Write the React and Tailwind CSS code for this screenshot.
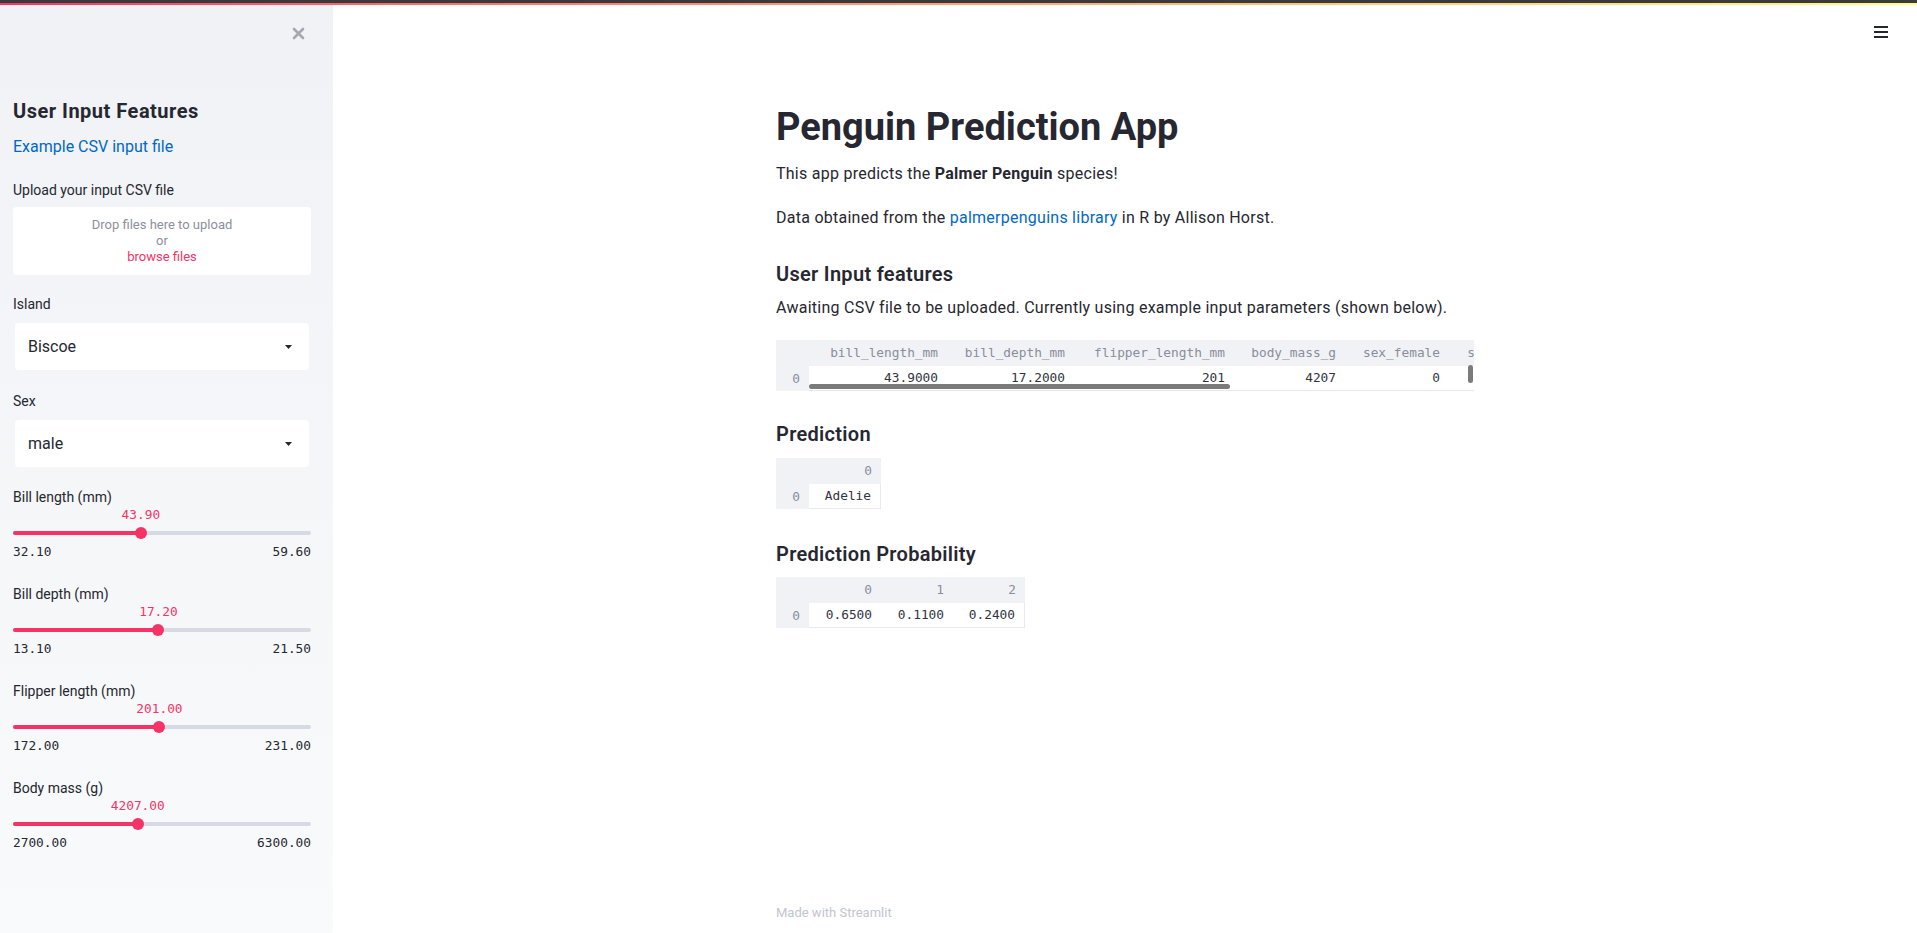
import React from "react";

const sliders = [
  { label: "Bill length (mm)", value: 43.9, min: 32.1, max: 59.6 },
  { label: "Bill depth (mm)", value: 17.2, min: 13.1, max: 21.5 },
  { label: "Flipper length (mm)", value: 201, min: 172, max: 231 },
  { label: "Body mass (g)", value: 4207, min: 2700, max: 6300 },
];

const inputCols = [
  { name: "bill_length_mm", value: "43.9000", w: "w-[137px]" },
  { name: "bill_depth_mm", value: "17.2000", w: "w-[127px]" },
  { name: "flipper_length_mm", value: "201", w: "w-[160px]" },
  { name: "body_mass_g", value: "4207", w: "w-[111px]" },
  { name: "sex_female", value: "0", w: "w-[104px]" },
  { name: "sex_male", value: "1", w: "w-[89px]" },
];

function Slider({ label, value, min, max }) {
  const pct = ((value - min) / (max - min)) * 100;
  return (
    <div className="mt-[23px] first:mt-[20px]">
      <div className="flex h-5 items-center text-[14px]">{label}</div>
      <div className="relative h-4">
        <span
          className="absolute top-0 -translate-x-1/2 font-['DejaVu_Sans_Mono',monospace] text-[12.8px] leading-4 text-[#f63366]"
          style={{ left: `${pct}%` }}
        >
          {value.toFixed(2)}
        </span>
      </div>
      <div className="relative flex h-5 items-center">
        <div className="h-1 w-full rounded-full bg-[#d5dae4]" />
        <div
          className="absolute left-0 h-1 rounded-full bg-[#f63366]"
          style={{ width: `${pct}%` }}
        />
        <div
          className="absolute h-3 w-3 -translate-x-1/2 rounded-full bg-[#f63366]"
          style={{ left: `${pct}%` }}
        />
      </div>
      <div className="flex h-[18px] items-center justify-between font-['DejaVu_Sans_Mono',monospace] text-[12.8px]">
        <span>{min.toFixed(2)}</span>
        <span>{max.toFixed(2)}</span>
      </div>
    </div>
  );
}

function SelectBox({ value }) {
  return (
    <div className="mx-[2px] mt-[9px] flex h-[47px] items-center justify-between rounded bg-white pl-[13px] pr-[17px] text-[16px]">
      <span>{value}</span>
      <svg width="7" height="4" viewBox="0 0 7 4">
        <polygon points="0,0 7,0 3.5,4" fill="#262730" />
      </svg>
    </div>
  );
}

function Sidebar() {
  return (
    <div className="flex h-[928px] w-[333px] shrink-0 flex-col bg-linear-to-b from-[#f0f2f6] to-[#f9fafb] pl-[13px] pr-[22px] text-[#262730]">
      <div className="flex h-[90px] justify-end pr-[6px] pt-[22px]">
        <svg width="13" height="13" viewBox="0 0 13 13">
          <path d="M2 2 L11 11 M11 2 L2 11" stroke="#a5a8b2" strokeWidth="2.6" strokeLinecap="round" />
        </svg>
      </div>
      <div className="flex h-8 items-center text-[20px] font-bold tracking-[0.025em]">User Input Features</div>
      <div className="flex h-10 items-center text-[16px] text-[#0068c9]">Example CSV input file</div>
      <div className="mt-[13px] flex h-5 items-center text-[14px]">Upload your input CSV file</div>
      <div className="mt-[7px] flex h-[68px] flex-col items-center justify-center rounded bg-white text-[13px] leading-4">
        <span className="text-[#8d909c]">Drop files here to upload</span>
        <span className="text-[#8d909c]">or</span>
        <span className="text-[#f63366]">browse files</span>
      </div>
      <div className="mt-[19px] flex h-5 items-center text-[14px]">Island</div>
      <SelectBox value="Biscoe" />
      <div className="mt-[21px] flex h-5 items-center text-[14px]">Sex</div>
      <SelectBox value="male" />
      <div>
        {sliders.map((s) => (
          <Slider key={s.label} {...s} />
        ))}
      </div>
    </div>
  );
}

function SmallTable({ header, row }) {
  return (
    <div className="flex w-fit font-['DejaVu_Sans_Mono',monospace] text-[12.8px]">
      <div className="w-[33px] bg-[#f0f2f6] text-[#8a8d9b]">
        <div className="h-[26px]" />
        <div className="flex h-[25px] items-center justify-end pr-[9px]">0</div>
      </div>
      {header.map((h, i) => (
        <div key={h} className="w-[72px]">
          <div className="flex h-[26px] items-center justify-end bg-[#f0f2f6] pr-[9px] text-[#8a8d9b]">{h}</div>
          <div
            className={
              "flex h-[25px] items-center justify-end border-b border-[#e6e9ef] bg-white pr-[9px] text-[#31333f] " +
              (i === header.length - 1 ? "border-r" : "")
            }
          >
            {row[i]}
          </div>
        </div>
      ))}
    </div>
  );
}

function InputTable() {
  return (
    <div className="relative mt-[20px] w-full overflow-hidden font-['DejaVu_Sans_Mono',monospace] text-[12.8px]">
      <div className="flex">
        <div className="w-[33px] shrink-0 bg-[#f0f2f6] text-[#8a8d9b]">
          <div className="h-[26px]" />
          <div className="flex h-[25px] items-center justify-end pr-[9px]">0</div>
        </div>
        {inputCols.map((c) => (
          <div key={c.name} className={"shrink-0 " + c.w}>
            <div className="flex h-[26px] items-center justify-end bg-[#f0f2f6] pr-2 text-[#8a8d9b]">{c.name}</div>
            <div className="flex h-[25px] items-center justify-end border-b border-[#e6e9ef] bg-white pr-2 text-[#31333f]">
              {c.value}
            </div>
          </div>
        ))}
      </div>
      <div className="absolute left-[33px] top-[44px] h-[5px] w-[421px] rounded-full bg-[#7b7b7b]" />
      <div className="absolute right-[1px] top-[25px] h-[18px] w-[5px] rounded-full bg-[#7b7b7b]" />
    </div>
  );
}

function Main() {
  return (
    <div className="relative flex h-[928px] flex-1 flex-col">
      <svg className="absolute right-[29px] top-[21px]" width="14" height="12" viewBox="0 0 14 12">
        <rect x="0" y="0" width="14" height="2" fill="#262730" />
        <rect x="0" y="5" width="14" height="2" fill="#262730" />
        <rect x="0" y="10" width="14" height="2" fill="#262730" />
      </svg>
      <div className="mx-auto flex h-full w-[730px] flex-col px-4 text-[#262730]">
        <h1 className="mt-[97px] flex h-[50px] items-center text-[38px] font-bold">Penguin Prediction App</h1>
        <p className="mt-[10px] flex h-6 items-center text-[16px] tracking-[0.016em]">
          This app predicts the&nbsp;<b className="font-bold">Palmer Penguin</b>&nbsp;species!
        </p>
        <p className="mt-[20px] flex h-6 items-center text-[16px] tracking-[0.016em]">
          Data obtained from the&nbsp;<span className="text-[#0068c9]">palmerpenguins library</span>&nbsp;in R by Allison Horst.
        </p>
        <h3 className="mt-[28px] flex h-8 items-center text-[20px] font-semibold tracking-[0.015em]">User Input features</h3>
        <p className="mt-[6px] flex h-6 items-center text-[16px] tracking-[0.016em]">
          Awaiting CSV file to be uploaded. Currently using example input parameters (shown below).
        </p>
        <InputTable />
        <h3 className="mt-[27px] flex h-8 items-center text-[20px] font-semibold tracking-[0.015em]">Prediction</h3>
        <div className="mt-[8px]">
          <SmallTable header={["0"]} row={["Adelie"]} />
        </div>
        <h3 className="mt-[29px] flex h-8 items-center text-[20px] font-semibold tracking-[0.015em]">
          Prediction Probability
        </h3>
        <div className="mt-[7px]">
          <SmallTable header={["0", "1", "2"]} row={["0.6500", "0.1100", "0.2400"]} />
        </div>
        <div className="mb-[10px] mt-auto flex h-5 items-center text-[13px] text-[#c2c5ce]">Made with Streamlit</div>
      </div>
    </div>
  );
}

export default function App() {
  return (
    <div className="min-h-[933px] bg-white font-['Roboto',sans-serif] text-[#262730]">
      <div className="h-[3px] bg-[#3a3a3c]" />
      <div className="h-[2px] bg-linear-to-r from-[#f63366] to-[#fffd80]" />
      <div className="flex">
        <Sidebar />
        <Main />
      </div>
    </div>
  );
}
